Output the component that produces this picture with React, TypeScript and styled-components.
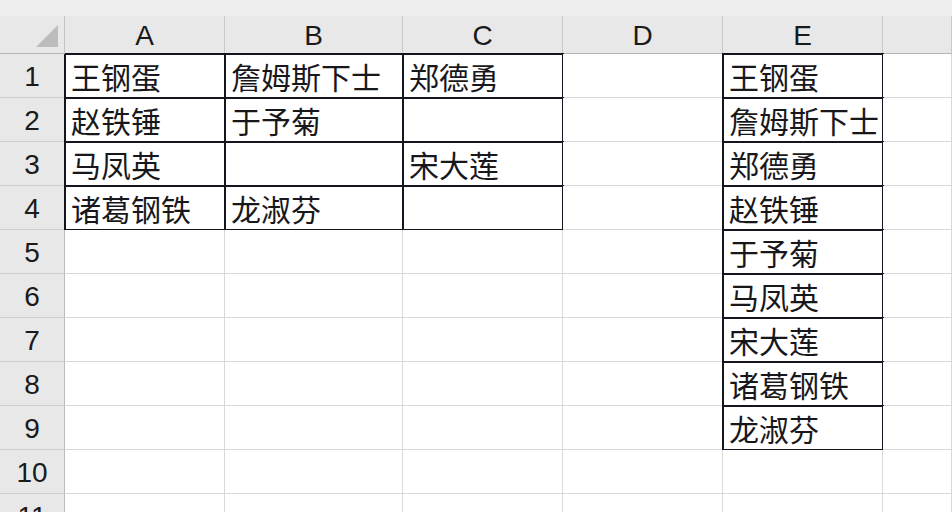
import React from "react";
import styled, { createGlobalStyle } from "styled-components";

const Global = createGlobalStyle`
  html, body { margin: 0; padding: 0; background: #ffffff; overflow: hidden; }
  #root { width: 952px; height: 512px; }
`;

const Sheet = styled.div`
  width: 952px;
  height: 512px;
  overflow: hidden;
  background: #ffffff;
  display: flex;
  flex-direction: column;
`;

const TopStrip = styled.div`
  height: 16px;
  flex: none;
  background: #eeeeee;
`;

const Grid = styled.div`
  display: grid;
  grid-template-columns: 65px 160px 178px 160px 160px 160px 1fr;
  grid-template-rows: 38px;
  grid-auto-rows: 44px;
`;

const Corner = styled.div`
  box-sizing: border-box;
  background: #e8e8e8;
  border-right: 1px solid #c4c4c4;
  border-bottom: 1px solid #b4b4b4;
  position: relative;
`;

const CornerTriangle = styled.svg`
  position: absolute;
  left: 36px;
  top: 9px;
`;

const ColHeader = styled.div`
  box-sizing: border-box;
  background: #e8e8e8;
  border-right: 1px solid #c8c8c8;
  border-bottom: 1px solid #b4b4b4;
  display: flex;
  align-items: center;
  justify-content: center;
  padding-top: 3px;
  font-family: "Liberation Sans", Arial, sans-serif;
  font-size: 28px;
  color: #1a1a1a;
`;

const RowHeader = styled.div`
  box-sizing: border-box;
  background: #e8e8e8;
  border-right: 1px solid #bcbcbc;
  border-bottom: 1px solid #cfcfcf;
  display: flex;
  align-items: center;
  justify-content: center;
  padding-top: 2px;
  font-family: "Liberation Sans", Arial, sans-serif;
  font-size: 28px;
  color: #1a1a1a;
`;

const Cell = styled.div<{ $boxed?: boolean }>`
  box-sizing: border-box;
  background: #ffffff;
  border-right: 1px solid #d8d8d8;
  border-bottom: 1px solid #d8d8d8;
  display: flex;
  align-items: center;
  padding: 0 0 0 6px;
  white-space: nowrap;
  overflow: visible;
  font-family: "Noto Sans CJK SC", "Noto Sans", sans-serif;
  font-size: 30px;
  line-height: 1;
  color: #18181c;
  outline: ${(p) => (p.$boxed ? "2px solid #15151f" : "none")};
  outline-offset: -1px;
`;

const columns = ["A", "B", "C", "D", "E", ""];

const data: string[][] = [
  ["王钢蛋", "詹姆斯下士", "郑德勇", "", "王钢蛋", ""],
  ["赵铁锤", "于予菊", "", "", "詹姆斯下士", ""],
  ["马凤英", "", "宋大莲", "", "郑德勇", ""],
  ["诸葛钢铁", "龙淑芬", "", "", "赵铁锤", ""],
  ["", "", "", "", "于予菊", ""],
  ["", "", "", "", "马凤英", ""],
  ["", "", "", "", "宋大莲", ""],
  ["", "", "", "", "诸葛钢铁", ""],
  ["", "", "", "", "龙淑芬", ""],
  ["", "", "", "", "", ""],
  ["", "", "", "", "", ""],
];

const isBoxed = (r: number, c: number) =>
  (r <= 3 && c <= 2) || (c === 4 && r <= 8);

export default function App() {
  return (
    <>
      <Global />
      <Sheet>
        <TopStrip />
        <Grid>
          <Corner>
            <CornerTriangle width="22" height="22" viewBox="0 0 22 22">
              <polygon points="22,0 22,22 0,22" fill="#bcbcbc" />
            </CornerTriangle>
          </Corner>
          {columns.map((c, i) => (
            <ColHeader key={i}>{c}</ColHeader>
          ))}
          {data.map((row, r) => (
            <React.Fragment key={r}>
              <RowHeader>{r + 1}</RowHeader>
              {row.map((v, c) => (
                <Cell key={c} $boxed={isBoxed(r, c)}>
                  {v}
                </Cell>
              ))}
            </React.Fragment>
          ))}
        </Grid>
      </Sheet>
    </>
  );
}
